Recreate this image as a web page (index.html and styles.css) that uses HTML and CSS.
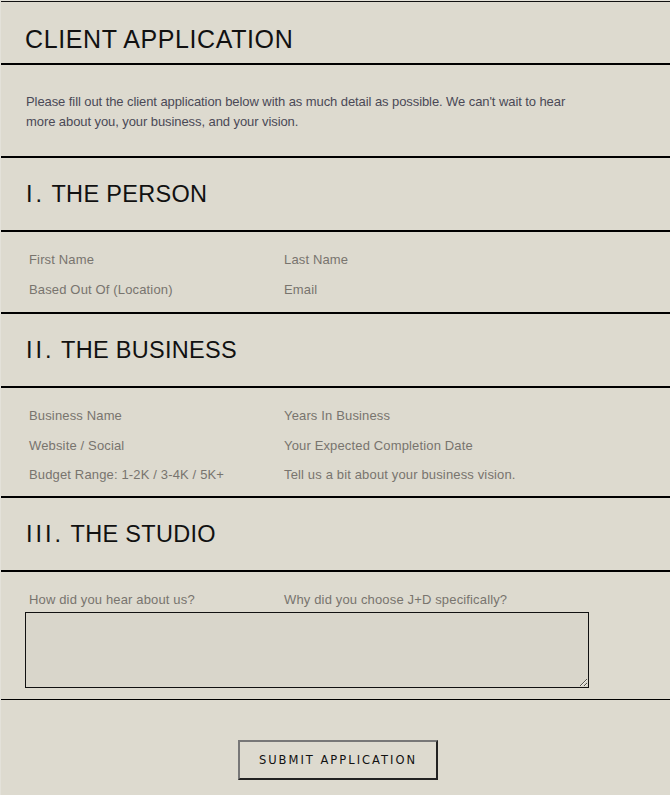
FILE: index.html
```html
<!DOCTYPE html>
<html lang="en">
<head>
<meta charset="utf-8">
<title>Client Application</title>
<link rel="stylesheet" href="styles.css">
</head>
<body>
<div class="page">
  <header class="title-block">
    <h1 class="title">CLIENT APPLICATION</h1>
  </header>
  <section class="intro">
    <p>Please fill out the client application below with as much detail as possible. We can't wait to hear more about you, your business, and your vision.</p>
  </section>

  <section class="heading-block"><h2 class="heading"><span class="numeral">I.</span> THE PERSON</h2></section>
  <section class="fields">
    <div class="row"><span class="label">First Name</span><span class="label">Last Name</span></div>
    <div class="row"><span class="label">Based Out Of (Location)</span><span class="label">Email</span></div>
  </section>

  <section class="heading-block"><h2 class="heading"><span class="numeral">II.</span> THE BUSINESS</h2></section>
  <section class="fields business">
    <div class="row"><span class="label">Business Name</span><span class="label">Years In Business</span></div>
    <div class="row"><span class="label">Website / Social</span><span class="label">Your Expected Completion Date</span></div>
    <div class="row"><span class="label">Budget Range: 1-2K / 3-4K / 5K+</span><span class="label">Tell us a bit about your business vision.</span></div>
  </section>

  <section class="heading-block"><h2 class="heading"><span class="numeral">III.</span> THE STUDIO</h2></section>
  <section class="fields studio">
    <div class="row"><span class="label">How did you hear about us?</span><span class="label">Why did you choose J+D specifically?</span></div>
    <textarea class="answer"></textarea>
  </section>

  <section class="submit-block">
    <button class="submit" type="button">SUBMIT APPLICATION</button>
  </section>
</div>
</body>
</html>
```

FILE: styles.css
```css
html, body {
  margin: 0;
  padding: 0;
}
body {
  background: #e3e1d9;
  padding-left: 1px;
  font-family: "Liberation Sans", Arial, sans-serif;
}
.page {
  background: #dddacf;
  margin-top: 1px;
  border-top: 1px solid #111;
  min-height: 793px;
}
.title-block {
  height: 48px;
  padding-top: 13px;
  display: flex;
  align-items: center;
  padding-left: 24px;
  border-bottom: 2px solid #000;
}
.title, .heading {
  margin: 0;
  font-weight: normal;
  color: #111;
  line-height: 1;
}
.title {
  font-size: 25px;
  letter-spacing: 0.6px;
}
.heading {
  font-size: 23.5px;
  letter-spacing: 0.3px;
}
.numeral {
  letter-spacing: 3px;
}
.intro {
  padding: 27px 24px 24px 25px;
  border-bottom: 2px solid #000;
}
.intro p {
  margin: 0;
  max-width: 560px;
  font-size: 13px;
  line-height: 20px;
  color: #4a4956;
  letter-spacing: -0.08px;
}
.heading-block {
  height: 70px;
  padding-top: 2px;
  display: flex;
  align-items: center;
  padding-left: 25px;
  border-bottom: 2px solid #000;
}
.fields {
  padding: 20px 0 14px 28px;
  display: flex;
  flex-direction: column;
  gap: 14px;
  border-bottom: 2px solid #000;
}
.business {
  gap: 13.5px;
  padding-bottom: 13px;
}
.row {
  display: grid;
  grid-template-columns: 255px 1fr;
}
.label {
  font-size: 13px;
  line-height: 16px;
  color: #78746e;
  letter-spacing: 0.15px;
}
.studio {
  gap: 4px;
  padding-left: 24px;
  padding-bottom: 11px;
  border-bottom: 1px solid #000;
}
.studio .row {
  padding-left: 4px;
}
.answer {
  display: block;
  box-sizing: border-box;
  width: 564px;
  height: 76px;
  margin: 0;
  border: 1px solid #111;
  background: #d9d6cb;
  resize: vertical;
}
.submit-block {
  display: flex;
  justify-content: center;
  padding: 40px 0 16px 5px;
}
.submit {
  width: 200px;
  height: 40px;
  background: transparent;
  border: 2px solid;
  border-color: #777 #222 #222 #777;
  font-family: "DejaVu Sans", "Liberation Sans", sans-serif;
  font-size: 11.5px;
  letter-spacing: 2px;
  color: #111;
  padding: 0;
}
```
